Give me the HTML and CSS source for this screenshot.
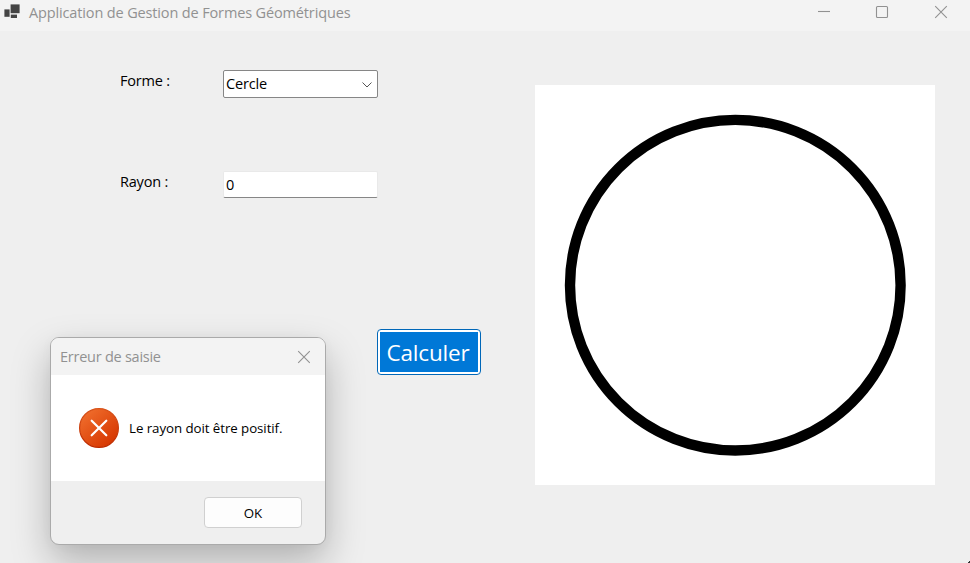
FILE: index.html
```html
<!DOCTYPE html>
<html lang="fr">
<head>
<meta charset="utf-8">
<title>Application de Gestion de Formes Géométriques</title>
<link rel="stylesheet" href="styles.css">
</head>
<body>
<div class="window">
  <header class="titlebar">
    <svg class="app-icon" width="16" height="16" viewBox="0 0 16 16" fill="#444">
      <rect x="6.6" y=".4" width="9" height="8.8"/><rect x=".4" y="5.4" width="5.2" height="7.4"/><rect x="6.8" y="10.6" width="6.2" height="3.4"/>
    </svg>
    <h1 class="title">Application de Gestion de Formes Géométriques</h1>
    <div class="controls">
      <svg width="14" height="14" viewBox="0 0 14 14"><path d="M1 6.5h12"/></svg>
      <svg width="14" height="14" viewBox="0 0 14 14"><rect x="1.5" y="1.5" width="11" height="11" rx="1"/></svg>
      <svg width="14" height="14" viewBox="0 0 14 14"><path d="M1.2 1.2l11.6 11.6M12.8 1.2L1.2 12.8"/></svg>
    </div>
  </header>
  <main class="content">
    <form class="form">
      <div class="row">
        <span class="label">Forme :</span>
        <div class="field select"><span class="value value-shape">Cercle</span>
          <svg width="12" height="8" viewBox="0 0 12 8"><path d="M1.5 1.5L6 6l4.5-4.5"/></svg>
        </div>
      </div>
      <div class="row">
        <span class="label label-radius">Rayon :</span>
        <div class="field input"><span class="value">0</span></div>
      </div>
      <button type="button" class="calc"><span>Calculer</span></button>
    </form>
    <div class="canvas">
      <svg width="400" height="400" viewBox="0 0 400 400"><circle cx="200.3" cy="200.2" r="165.3" fill="none" stroke="#000" stroke-width="10.4"/></svg>
    </div>
  </main>
  <section class="dialog">
    <header class="dialog-head">
      <span class="dialog-title">Erreur de saisie</span>
      <svg class="dialog-close" width="14" height="14" viewBox="0 0 14 14"><path d="M1.2 1.2l11.6 11.6M12.8 1.2L1.2 12.8"/></svg>
    </header>
    <div class="dialog-body">
      <svg width="40" height="40" viewBox="0 0 40 40">
        <defs><linearGradient id="err" x1=".15" y1=".1" x2=".85" y2=".9"><stop offset="0" stop-color="#ef6c2b"/><stop offset="1" stop-color="#d63600"/></linearGradient>
        <linearGradient id="rim" x1="0" y1="0" x2="0" y2="1"><stop offset="0" stop-color="#d9531a"/><stop offset="1" stop-color="#bd2b00"/></linearGradient></defs>
        <circle cx="20" cy="20" r="19.4" fill="url(#err)" stroke="url(#rim)" stroke-width="1.2"/>
        <path d="M12.7 12.7l14.6 14.6M27.3 12.7L12.7 27.3" stroke="#fff" stroke-width="2.2" stroke-linecap="round"/>
      </svg>
      <span class="message">Le rayon doit être positif.</span>
    </div>
    <footer class="dialog-foot"><button type="button" class="ok">OK</button></footer>
  </section>
  <span class="corner"></span>
</div>
</body>
</html>
```
FILE: styles.css
```css
* { box-sizing: border-box; }
body { margin: 0; font-family: "Open Sans", "Noto Sans", sans-serif; color: #000; }
button { font-family: inherit; padding: 0; }
.window { position: relative; width: 970px; height: 563px; background: #efefef; overflow: hidden; }
.titlebar { height: 31px; display: flex; align-items: flex-start; background: #f3f3f3; padding: 4px 22px 0 4px; }
.app-icon { flex: none; }
.title { margin: -1px 0 0 9px; font-size: 14.5px; line-height: 20px; font-weight: 400; color: #919191; white-space: nowrap; letter-spacing: -0.14px; }
.controls { margin-left: auto; display: flex; gap: 44px; padding-top: 1px; }
.controls svg:first-child { margin-right: 0; }
.controls svg, .dialog-close { fill: none; stroke: #919191; stroke-width: 1.1; }
.controls svg:last-child { margin-left: 1px; }
.content { display: flex; justify-content: space-between; padding: 39px 35px 0 120px; }
.form { display: flex; flex-direction: column; width: 361px; }
.row { display: flex; height: 101px; }
.label { width: 103px; font-size: 14.5px; letter-spacing: -0.2px; line-height: 20px; padding-top: 1px; }
.field { width: 155px; height: 28px; display: flex; align-items: center; justify-content: space-between; background: #fff; font-size: 14.5px; letter-spacing: -0.15px; padding: 0 4px 0 2px; }
.value-shape { padding-bottom: 2px; }
.select { border: 1px solid #868686; border-radius: 2px; }
.select svg { fill: none; stroke: #555; stroke-width: 1; margin-top: 1px; }
.input { height: 27px; border: 1px solid #e9e9e9; border-bottom-color: #868686; border-radius: 2px; }
.calc { align-self: flex-end; width: 104px; height: 46px; margin-top: 57px; border: 1px solid #0067b8; border-radius: 4px; background: #fff; padding: 2px; color: #fff; font-size: 22.5px; letter-spacing: -0.2px; }
.calc span { display: flex; align-items: center; justify-content: center; height: 40px; background: #0078d7; padding-right: 2px; }
.canvas { width: 400px; height: 400px; margin-top: 15px; background: #fff; }
.canvas svg { display: block; }
.dialog { position: absolute; left: 50px; top: 337px; width: 276px; height: 208px; display: flex; flex-direction: column; overflow: hidden; border: 1px solid #aaa; border-radius: 9px; background: #efefef; box-shadow: 0 17px 38px rgba(0,0,0,.26), 0 1px 12px rgba(0,0,0,.03); }
.dialog-head { height: 37px; display: flex; align-items: center; justify-content: space-between; padding: 0 14px 0 9px; background: #f3f3f3; color: #919191; font-size: 14.5px; letter-spacing: -0.25px; }
.dialog-body { height: 106px; display: flex; align-items: center; gap: 10px; padding-left: 28px; background: #fff; font-size: 13.3px; letter-spacing: -0.06px; }
.dialog-foot { flex: 1; display: flex; justify-content: flex-end; align-items: flex-start; padding: 16px 23px 0 0; }
.ok { width: 98px; height: 31px; border: 1px solid #d0d0d0; border-radius: 4px; background: #fdfdfd; font-size: 13.3px; color: #000; }
.corner { position: absolute; right: 0; bottom: 0; width: 2px; height: 3px; background: linear-gradient(135deg, transparent 45%, #333 50%); }
```
